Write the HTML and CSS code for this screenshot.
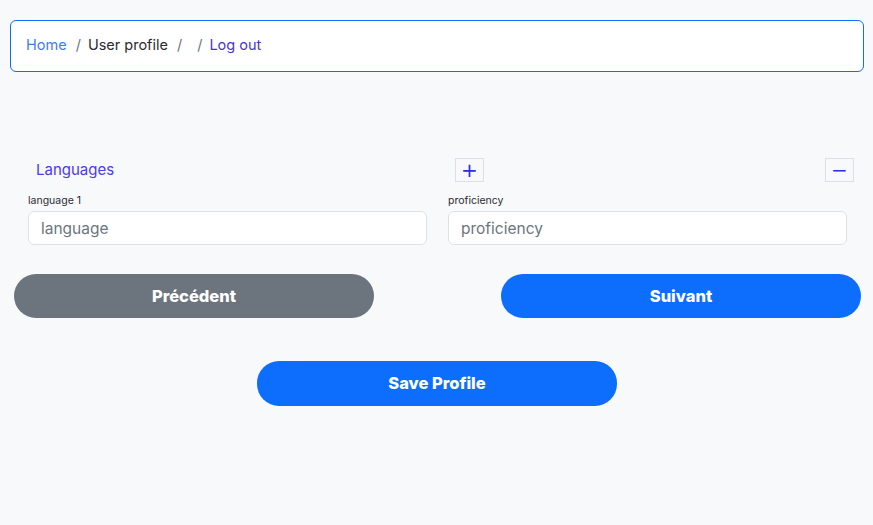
FILE: index.html
```html
<!DOCTYPE html>
<html lang="fr">
<head>
<meta charset="utf-8">
<title>User profile</title>
<link rel="stylesheet" href="styles.css">
</head>
<body>
<nav class="crumbs">
  <a class="crumb home" href="#">Home</a>
  <span class="sep">/</span>
  <span class="crumb current">User profile</span>
  <span class="sep">/</span>
  <span class="sep wide">/</span>
  <a class="crumb logout" href="#">Log out</a>
</nav>

<section class="langs">
  <div class="langs-head">
    <span class="langs-title">Languages</span>
    <button class="sq-btn" type="button">+</button>
    <button class="sq-btn minus" type="button">&minus;</button>
  </div>
  <div class="fields">
    <label class="field">
      <span class="field-label">language 1</span>
      <input class="field-input" type="text" placeholder="language">
    </label>
    <label class="field">
      <span class="field-label">proficiency</span>
      <input class="field-input" type="text" placeholder="proficiency">
    </label>
  </div>
</section>

<div class="nav-btns">
  <button class="pill grey" type="button">Précédent</button>
  <button class="pill blue" type="button">Suivant</button>
</div>

<div class="save-row">
  <button class="pill blue" type="button">Save Profile</button>
</div>
</body>
</html>
```

FILE: styles.css
```css
* { box-sizing: border-box; }

html, body {
  margin: 0;
  background: #f8f9fa;
  font-family: Inter, "Noto Sans", sans-serif;
  color: #212529;
}

body { height: 525px; overflow: hidden; }

.crumbs {
  margin: 20px 9px 0 10px;
  height: 52px;
  border: 1px solid #0d6efd;
  border-radius: 6px;
  background: #fff;
  display: flex;
  align-items: center;
  padding: 0 15px 3px;
  font-size: 14.5px;
}

.crumb { text-decoration: none; }
.home { color: #3d7cff; }
.current { color: #2b2b33; }
.logout { color: #4632e0; }
.sep { color: #6c757d; padding: 0 7px 0 9px; }
.sep.wide { padding-left: 8px; }

.langs {
  margin-top: 86px;
  padding-left: 28px;
}

.langs-head {
  display: flex;
  align-items: center;
  width: 826px;
  height: 23px;
}

.langs-title {
  width: 427px;
  padding-left: 8px;
  font-size: 15px;
  color: #4b3be8;
}

.sq-btn {
  width: 29px;
  height: 24px;
  padding: 0;
  border: 1px solid #dcdfe3;
  background: #f8f9fa;
  color: #2f2ee0;
  font-family: "DejaVu Sans", sans-serif;
  font-size: 20px;
  line-height: 20px;
  display: flex;
  align-items: center;
  justify-content: center;
}

.minus { margin-left: auto; }

.fields {
  display: grid;
  grid-template-columns: 399px 399px;
  column-gap: 21px;
  margin-top: 12px;
}

.field { display: flex; flex-direction: column; }

.field-label {
  font-size: 10.5px;
  line-height: 12px;
  margin-top: 2px;
  margin-bottom: 4px;
  color: #2b2b33;
}

.field-input {
  height: 34px;
  border: 1px solid #dee2e6;
  border-radius: 6px;
  background: #fff;
  padding: 0 12px;
  font-family: inherit;
  font-size: 15.5px;
  color: #212529;
}

.field-input::placeholder { color: #6c757d; }

.nav-btns {
  display: flex;
  justify-content: space-between;
  padding: 0 12px 0 14px;
  margin-top: 29px;
}

.pill {
  width: 360px;
  height: 44px;
  border: 0;
  border-radius: 22px;
  color: #fff;
  font-family: inherit;
  font-weight: 800;
  font-size: 16.5px;
  padding-bottom: 2px;
}

.grey { background: #6c757d; }
.blue { background: #0d6efd; }

.save-row {
  display: flex;
  justify-content: center;
  margin-top: 43px;
}

.save-row .pill { height: 45px; margin-left: 1px; }
```
